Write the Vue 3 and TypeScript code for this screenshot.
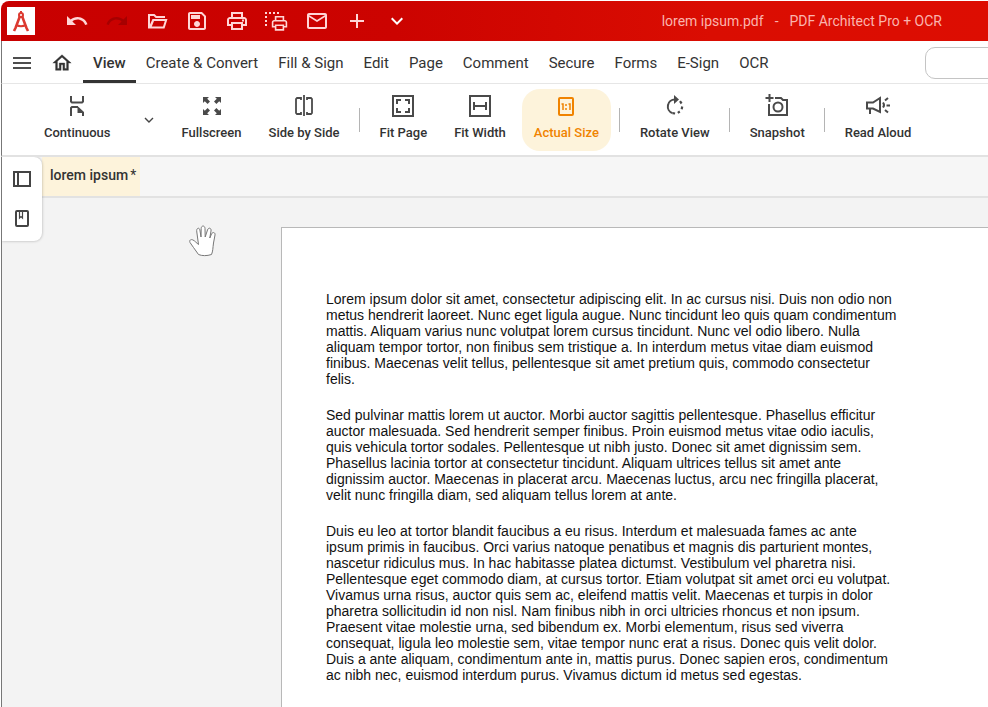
<script setup lang="ts">
import { ref } from 'vue'

interface Icon { label: string; paths: string[]; dim?: boolean }
interface Tool { label: string; icon: string; menu?: boolean; divider?: boolean }

const quickActions: Icon[] = [
  { label: 'Undo', paths: ['M12.5 8c-2.65 0-5.05.99-6.9 2.6L2 7v9h9l-3.62-3.62c1.39-1.16 3.16-1.88 5.12-1.88 3.54 0 6.55 2.31 7.6 5.5l2.37-.78C21.08 11.03 17.15 8 12.5 8z'] },
  { label: 'Redo', dim: true, paths: ['M18.4 10.6C16.55 8.99 14.15 8 11.5 8c-4.65 0-8.58 3.03-9.96 7.22L3.9 16c1.05-3.19 4.05-5.5 7.6-5.5 1.95 0 3.73.72 5.12 1.88L13 16h9V7l-3.6 3.6z'] },
  { label: 'Open', paths: ['M3 5h6.500l2 2H20v2h-9.300l-2-2H5v8.500L7.500 10H22.500L19.500 19.500H3zM9 12L6.800 17.500H18L19.800 12z'] },
  { label: 'Save', paths: ['M17 3H5c-1.110 0-2 .9-2 2v14c0 1.100.89 2 2 2h14c1.100 0 2-.9 2-2V7l-4-4zm2 16H5V5h11.170L19 7.830V19zm-7-7c-1.660 0-3 1.340-3 3s1.340 3 3 3 3-1.340 3-3-1.340-3-3-3zM6 6h9v4H6z'] },
  { label: 'Print', paths: ['M19 8h-1V3H6v5H5c-1.660 0-3 1.340-3 3v6h4v4h12v-4h4v-6c0-1.660-1.340-3-3-3zM8 5h8v3H8V5zm8 12v2H8v-4h8v2zm2-2v-2H6v2H4v-4c0-.55.45-1 1-1h14c.55 0 1 .45 1 1v4h-2z', 'M17 10.500h2v2h-2z'] },
  { label: 'Print selection', paths: ['M0 3h2v2H0zM4 3h2v2H4zM8 3h2v2H8zM12 3h2v2h-2zM0 7h2v2H0zM0 11h2v2H0zM0 15h2v2H0z', 'M19.900 11h-.7V7H9.800v4h-.7C7.800 11 6.800 12 6.800 13.300V18.500h3v3.200h9.400v-3.200h3v-5.200c0-1.300-1-2.300-2.300-2.300zM11.400 8.600h6.200V11h-6.200zM17.600 20.100h-6.200v-3h6.200zM19.200 17v-1.600H9.800V17H8.400v-3.700q0-.7.7-.7h10.800q.7 0 .7.700V17z'] },
  { label: 'Email', paths: ['M22 6c0-1.100-.9-2-2-2H4c-1.100 0-2 .9-2 2v12c0 1.100.9 2 2 2h16c1.100 0 2-.9 2-2V6zm-2 0l-8 5-8-5h16zm0 12H4V8l8 5 8-5v10z'] },
  { label: 'Add', paths: ['M19 13h-6v6h-2v-6H5v-2h6V5h2v6h6v2z'] },
  { label: 'More', paths: ['M16.590 8.590L12 13.170 7.410 8.590 6 10l6 6 6-6z'] },
]

const menus = ['View', 'Create & Convert', 'Fill & Sign', 'Edit', 'Page', 'Comment', 'Secure', 'Forms', 'E-Sign', 'OCR']
const activeMenu = ref('View')

const tools: Tool[] = [
  { label: 'Continuous', icon: 'continuous', menu: true },
  { label: 'Fullscreen', icon: 'fullscreen' },
  { label: 'Side by Side', icon: 'side', divider: true },
  { label: 'Fit Page', icon: 'page' },
  { label: 'Fit Width', icon: 'width' },
  { label: 'Actual Size', icon: 'actual', divider: true },
  { label: 'Rotate View', icon: 'rotate', divider: true },
  { label: 'Snapshot', icon: 'snapshot', divider: true },
  { label: 'Read Aloud', icon: 'read' },
]
const activeTool = ref('Actual Size')

const paragraphs: string[][] = [
  [
    'Lorem ipsum dolor sit amet, consectetur adipiscing elit. In ac cursus nisi. Duis non odio non',
    'metus hendrerit laoreet. Nunc eget ligula augue. Nunc tincidunt leo quis quam condimentum',
    'mattis. Aliquam varius nunc volutpat lorem cursus tincidunt. Nunc vel odio libero. Nulla',
    'aliquam tempor tortor, non finibus sem tristique a. In interdum metus vitae diam euismod',
    'finibus. Maecenas velit tellus, pellentesque sit amet pretium quis, commodo consectetur',
    'felis.',
  ],
  [
    'Sed pulvinar mattis lorem ut auctor. Morbi auctor sagittis pellentesque. Phasellus efficitur',
    'auctor malesuada. Sed hendrerit semper finibus. Proin euismod metus vitae odio iaculis,',
    'quis vehicula tortor sodales. Pellentesque ut nibh justo. Donec sit amet dignissim sem.',
    'Phasellus lacinia tortor at consectetur tincidunt. Aliquam ultrices tellus sit amet ante',
    'dignissim auctor. Maecenas in placerat arcu. Maecenas luctus, arcu nec fringilla placerat,',
    'velit nunc fringilla diam, sed aliquam tellus lorem at ante.',
  ],
  [
    'Duis eu leo at tortor blandit faucibus a eu risus. Interdum et malesuada fames ac ante',
    'ipsum primis in faucibus. Orci varius natoque penatibus et magnis dis parturient montes,',
    'nascetur ridiculus mus. In hac habitasse platea dictumst. Vestibulum vel pharetra nisi.',
    'Pellentesque eget commodo diam, at cursus tortor. Etiam volutpat sit amet orci eu volutpat.',
    'Vivamus urna risus, auctor quis sem ac, eleifend mattis velit. Maecenas et turpis in dolor',
    'pharetra sollicitudin id non nisl. Nam finibus nibh in orci ultricies rhoncus et non ipsum.',
    'Praesent vitae molestie urna, sed bibendum ex. Morbi elementum, risus sed viverra',
    'consequat, ligula leo molestie sem, vitae tempor nunc erat a risus. Donec quis velit dolor.',
    'Duis a ante aliquam, condimentum ante in, mattis purus. Donec sapien eros, condimentum',
    'ac nibh nec, euismod interdum purus. Vivamus dictum id metus sed egestas.',
  ],
]
</script>

<template>
  <div class="window">
    <header class="titlebar">
      <span class="logo">
        <svg width="28" height="28" viewBox="0 0 28 28" fill="none" stroke="#dc3a30">
          <path d="M14 4v3" stroke-width="2" />
          <circle cx="14" cy="8" r="2" stroke-width="2" />
          <path d="M13 9L8.500 21L7 24M15 9L19.500 21L21 24" stroke-width="2.600" />
          <path d="M9 18q5 2.500 10 0" stroke-width="2" />
        </svg>
      </span>
      <nav class="quick" aria-label="Quick actions">
        <button v-for="a in quickActions" :key="a.label" type="button" class="quick-btn" :class="{ dim: a.dim, bright: a.label === 'More' }" :aria-label="a.label" :disabled="a.dim">
          <svg width="24" height="24" viewBox="0 0 24 24" fill="currentColor" fill-rule="evenodd"><path v-for="p in a.paths" :key="p" :d="p" /></svg>
        </button>
      </nav>
      <div class="title"><span>lorem ipsum.pdf</span><span>-</span><span>PDF Architect Pro + OCR</span></div>
    </header>

    <nav class="menubar" aria-label="Main menu">
      <button type="button" class="glyph" aria-label="Menu">
        <svg width="20" height="20" viewBox="0 0 20 20" fill="#4d4d4d"><path d="M1 4h18v2H1zM1 9h18v2H1zM1 14h18v2H1z" /></svg>
      </button>
      <button type="button" class="glyph" aria-label="Home">
        <svg width="22" height="22" viewBox="0 0 24 24" fill="#333" stroke="#333" stroke-width=".4"><path d="M12 5.690l5 4.500V18h-2v-6H9v6H7v-7.810l5-4.500M12 3L2 12h3v8h6v-6h2v6h6v-8h3L12 3z" /></svg>
      </button>
      <div class="menus">
        <button v-for="m in menus" :key="m" type="button" class="menu" :class="{ active: m === activeMenu }" @click="activeMenu = m">{{ m }}</button>
      </div>
      <input class="search" type="search" aria-label="Search" />
    </nav>

    <section class="toolbar" aria-label="View tools">
      <template v-for="t in tools" :key="t.label">
        <button type="button" class="tool" :class="{ active: t.label === activeTool }" @click="activeTool = t.label">
          <svg width="24" height="24" viewBox="0 0 24 24" fill="none" stroke="currentColor" stroke-width="2">
            <template v-if="t.icon === 'continuous'">
              <path d="M6 2v5.500l1 1h10l1-1V2M6 22v-8l1-1h6" /><path d="M12.500 12L19 18v4h-2v-3h-4.500z" fill="currentColor" stroke="none" />
            </template>
            <template v-else-if="t.icon === 'fullscreen'">
              <path d="M3 3h6L7.200 4.800 10 7.600 7.600 10 4.800 7.200 3 9zM21 3v6l-1.800-1.800L16.400 10 14 7.600l2.800-2.800L15 3zM3 21v-6l1.800 1.800L7.600 14l2.400 2.400-2.800 2.800L9 21zM21 21h-6l1.800-1.800-2.800-2.800 2.400-2.400 2.800 2.800L21 15z" fill="currentColor" stroke="none" />
            </template>
            <template v-else-if="t.icon === 'side'">
              <path d="M9 6V4H5L4 5v14l1 1h4v-2M12 1v21M15 6V4h4l1 1v14l-1 1h-4v-2" stroke-width="1.800" />
            </template>
            <template v-else-if="t.icon === 'page'">
              <path d="M2 2h20v20H2zM6 10V6h4M14 6h4v4M18 14v4h-4M10 18H6v-4" />
            </template>
            <template v-else-if="t.icon === 'width'">
              <path d="M2 2h20v20H2zM6 8v8M18 8v8M6 12h12" />
            </template>
            <template v-else-if="t.icon === 'actual'">
              <rect x="5" y="4" width="14" height="17" rx="1" />
              <path d="M7.500 10H9v6M14.500 10H16v6M12 10v2M12 14v2" stroke-width="1.500" />
            </template>
            <template v-else-if="t.icon === 'rotate'">
              <path d="M12 5.500a7 7 0 0 0-2.500 13.600" />
              <path d="M11 1l5 4.500-5 4.500z" fill="currentColor" stroke="none" />
              <path d="M17 7.200l1.600 2.300M19.200 12.500l-.5 2.800M16.800 17.500l-2 1.300M9.500 19.100l2.600.4" stroke-width="2.200" />
            </template>
            <template v-else-if="t.icon === 'snapshot'">
              <path d="M4.500 0v8M.5 4h8M4 10v11h18V6h-4l-2-2h-6" /><circle cx="13" cy="13" r="4.500" />
            </template>
            <template v-else>
              <path d="M1 8.500h6L14 4v14l-7-3.500H1zM4 15v5M17 8.500q2 2.500 0 5" /><path d="M19 6.500L22 4M20.500 11.500H24M19 16l3 2.500" />
            </template>
          </svg>
          <span>{{ t.label }}</span>
        </button>
        <button v-if="t.menu" type="button" class="drop" aria-label="Page layout options">
          <svg width="10" height="10" viewBox="0 0 10 10" fill="none" stroke="#444" stroke-width="1.400"><path d="M1 3l4 4 4-4" /></svg>
        </button>
        <span v-if="t.divider" class="divider"></span>
      </template>
    </section>

    <main class="workspace">
      <aside class="side">
        <button type="button" aria-label="Pages panel">
          <svg width="20" height="20" viewBox="0 0 20 20" fill="none" stroke="#444" stroke-width="2"><path d="M2 3h16v14H2zM6 3v14" /></svg>
        </button>
        <button type="button" aria-label="Bookmarks panel">
          <svg width="20" height="20" viewBox="0 0 20 20" fill="none" stroke="#444" stroke-width="2"><rect x="4" y="2" width="12" height="15" rx="1" /><path d="M7.500 2v7L9 7.500l1.500 1.500V2" stroke-width="1.200" /></svg>
        </button>
      </aside>
      <div class="tabs"><button type="button" class="tab">lorem ipsum<span>*</span></button></div>
      <div class="canvas">
        <svg class="hand" width="30" height="34" viewBox="0 0 30 34" fill="#fff" stroke="#777" stroke-width="1">
          <path d="M11.500 30.500C10 28 8 26 6.500 23.500L3 18.500C2 16 4 15 6 16C8 17 9.500 19 11.500 20.500L9.800 8C9 4 12.200 3 12.900 6L14 13L14.200 4.500C14.300 1.200 17.800 1.200 18 4.500L18.200 13L20.500 6C21.500 3 24.600 4 24 7L22.800 14L24.500 10C25.700 7.500 28.500 8.500 28 11L26.500 19C25.800 24 26 27 24.500 30.500C20 32 15 32 11.500 30.500z" />
        </svg>
        <article class="page">
          <p v-for="(para, i) in paragraphs" :key="i"><span v-for="line in para" :key="line">{{ line }}</span></p>
        </article>
      </div>
    </main>
  </div>
</template>

<style>
body { margin: 0; background: #fff; overflow: hidden; }
</style>

<style scoped>
.window { box-sizing: border-box; height: 100vh; margin-left: 1px; padding-top: 1px; display: flex; flex-direction: column; font-family: Roboto, "Liberation Sans", sans-serif; color: #333; overflow: hidden; }
button { font: inherit; color: inherit; background: none; border: 0; padding: 0; margin: 0; }
svg { display: block; flex: none; }

.titlebar { flex: none; height: 40px; display: flex; align-items: center; padding: 0 46px 0 6px; border-radius: 8px 0 0 0; background: linear-gradient(90deg, #c80000, #cc0300 40%, #da0d02 72%, #dd0d02); }
.logo { width: 28px; height: 28px; background: #fff; }
.quick { display: flex; margin-left: 22px; }
.quick-btn { width: 40px; height: 40px; display: grid; place-items: center; color: #ffd6d6; }
.quick-btn.dim { color: #a60000; }
.quick-btn.bright { color: #fff; }
.title { display: flex; gap: 11px; margin-left: auto; font-size: 14px; color: #fab4ae; white-space: pre; }

.menubar { flex: none; box-sizing: border-box; height: 43px; display: flex; align-items: center; border-left: 1px solid #777; border-bottom: 1px solid #e6e6e6; }
.glyph { width: 40px; height: 42px; padding-top: 2px; display: grid; place-items: center; }
.menus { display: flex; align-self: stretch; margin-left: 1px; }
.menu { padding: 4px 10px 0; border-bottom: 3px solid transparent; font-size: 15px; white-space: nowrap; }
.menu.active { border-bottom-color: #333; font-weight: 500; }
.search { box-sizing: border-box; flex: 1; min-width: 0; height: 32px; margin: 2px -20px 0 147px; border: 1px solid #c4c4c4; border-radius: 10px; background: #fff; }

.toolbar { flex: none; box-sizing: border-box; height: 73px; display: flex; align-items: center; gap: 5px; padding-left: 31px; border-left: 1px solid #777; border-bottom: 2px solid #e2e2e2; }
.tool { box-sizing: border-box; height: 62px; padding: 5px 11px 0; display: flex; flex-direction: column; align-items: center; gap: 7px; border-radius: 18px; font-size: 13px; line-height: 15px; font-weight: 500; white-space: nowrap; }
.tool svg { color: #4a4a4a; }
.tool.active, .tool.active svg { color: #f08300; }
.tool.active { padding: 5px 12px 0; background: #fdf3db; }
.drop { width: 40px; height: 62px; margin: 0 -3px 0 2px; display: grid; place-items: center; }
.divider { width: 1px; height: 24px; margin: 0 4px 0 3px; background: #b4b4b4; }

.workspace { position: relative; flex: 1; min-height: 0; display: flex; flex-direction: column; border-left: 1px solid #777; background: #f3f3f3; }
.tabs { flex: none; height: 39px; padding-left: 40px; background: #f6f6f6; border-bottom: 2px solid #e2e2e2; }
.tab { height: 39px; padding: 0 4px 3px 8px; background: #fdf3db; font-size: 14px; font-weight: 500; white-space: nowrap; }
.tab span { font-weight: 400; margin-left: 2px; }
.side { position: absolute; left: 0; top: 0; display: flex; flex-direction: column; padding: 2px 0; background: #fff; border-radius: 0 8px 8px 0; box-shadow: 0 0 3px rgba(0, 0, 0, .3); clip-path: inset(0 -6px -6px 0); }
.side button { width: 40px; height: 40px; display: grid; place-items: center; }
.canvas { flex: 1; min-height: 0; display: flex; align-items: flex-start; padding-top: 29px; }
.hand { margin: -3px 64px 0 185px; }
.page { flex: 1; min-width: 0; box-sizing: border-box; min-height: 100%; padding: 63px 44px; border: 1px solid #b8b8b8; border-right: 0; background: #fff; color: #111; font: 14px/16px "Liberation Sans", Arial, sans-serif; }
.page p { margin: 0 0 20px; }
.page p span { display: block; white-space: nowrap; }
</style>
